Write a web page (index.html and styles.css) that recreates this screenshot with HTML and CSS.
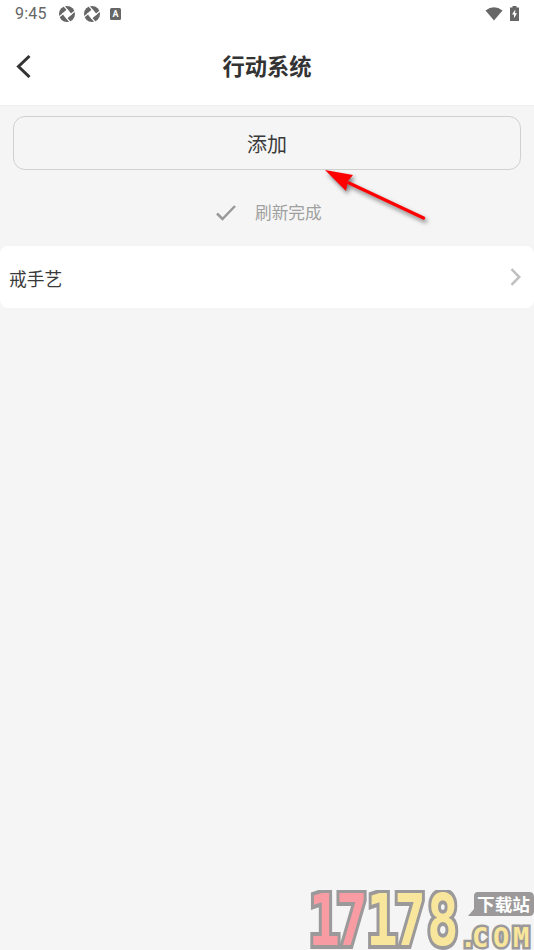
FILE: index.html
```html
<!DOCTYPE html>
<html lang="zh-CN">
<head>
<meta charset="utf-8">
<title>行动系统</title>
<link rel="stylesheet" href="styles.css">
</head>
<body>
<div class="app">
  <header class="header">
    <div class="status">
      <span class="time">9:45</span>
      <svg class="aperture" viewBox="0 0 16 16"><circle cx="8" cy="8" r="8"/><path class="hole" d="M8.500 3.100L12.900 8.500 7.500 12.900 3.100 7.500Z"/><path class="gap" d="M8.500 4.200L5 0M11.800 8.500L16 5M7.500 11.800L11 16M4.200 7.500L0 11"/></svg>
      <svg class="aperture" viewBox="0 0 16 16"><circle cx="8" cy="8" r="8"/><path class="hole" d="M8.500 3.100L12.900 8.500 7.500 12.900 3.100 7.500Z"/><path class="gap" d="M8.500 4.200L5 0M11.800 8.500L16 5M7.500 11.800L11 16M4.200 7.500L0 11"/></svg>
      <span class="badge">A</span>
      <span class="spacer"></span>
      <svg class="wifi" viewBox="0 0 18 14"><path d="M.5 3.400Q9-3 17.500 3.400L9 13.500Z"/></svg>
      <svg class="battery" viewBox="0 0 9 15"><path class="cell" d="M2.500 0h4v1.500H9V15H0V1.500h2.500Z"/><path class="bolt" d="M5.300 3.500L2 8.500h2v3.800L7 7.200H5.100Z"/></svg>
    </div>
    <div class="titlebar">
      <svg class="back" viewBox="0 0 16 24"><path d="M13.500 2L2.500 12.500l11 10.500"/></svg>
      <h1>行动系统</h1>
    </div>
  </header>
  <main>
    <button class="add">添加</button>
    <div class="refresh">
      <svg class="check" viewBox="0 0 20 16"><path d="M1 8.500l5.500 5.500L19 1"/></svg>
      <span>刷新完成</span>
    </div>
    <div class="item">
      <span>戒手艺</span>
      <svg class="next" viewBox="0 0 11 18"><path d="M1.500 1.200L9.300 9l-7.800 7.800"/></svg>
    </div>
  </main>
  <svg class="arrow" viewBox="0 0 120 66"><path class="shaft" d="M28 17L102.500 52"/><path class="head" d="M4 4l28 5-5 6-2 10Z"/></svg>
  <svg class="watermark" viewBox="0 0 224 60">
    <text class="digits" transform="scale(0.74 1)" x="-2 35 76 114 158" y="55"><tspan class="pink">17</tspan><tspan class="gold">178</tspan></text>
    <path class="bubble" d="M168 2h51q5 0 5 5v14q0 5-5 5h-61l6-7V6q0-4 4-4Z"/>
    <text class="site" x="167" y="20.500" textLength="53" lengthAdjust="spacingAndGlyphs">下载站</text>
    <text class="com" x="150 162 183 203" y="57">.COM</text>
  </svg>
</div>
</body>
</html>
```
FILE: styles.css
```css
* { box-sizing: border-box; }
body { margin: 0; font-family: "Noto Sans CJK SC", sans-serif; color: #333; }
.app { position: relative; height: 950px; overflow: hidden; background: #f5f5f5; }
.header { height: 106px; background: #fff; border-bottom: 1px solid #efefef; }
.status { display: flex; align-items: center; height: 27px; padding: 0 15px; color: #666; }
.time { width: 44px; font: 16px/27px Roboto, sans-serif; letter-spacing: 0.2px; }
.aperture { width: 16px; height: 16px; margin-right: 8.500px; fill: #666; }
.hole { fill: #fff; }
.gap { fill: none; stroke: #fff; stroke-width: 1.200; }
.badge { width: 11px; height: 12px; margin-left: 2px; border-radius: 1.500px; background: #666; color: #fff; font: bold 9px/12px Roboto, sans-serif; text-align: center; }
.spacer { flex: 1; }
.wifi { width: 18px; height: 14px; margin-right: 7px; fill: #666; }
.battery { width: 9px; height: 15px; }
.cell { fill: #666; }
.bolt { fill: #fff; }
.titlebar { display: grid; grid-template-columns: 32px 1fr 32px; align-items: center; height: 78px; padding: 0 16px; }
.back { width: 16px; height: 24px; fill: none; stroke: #333; stroke-width: 3; }
h1 { margin: -2px 0 0; font-size: 22.300px; line-height: 32px; font-weight: 700; text-align: center; }
.add { display: block; width: 508px; height: 54px; margin: 10px auto 0; padding: 1px 0 0; border: 1.500px solid #d0d0d0; border-radius: 12px; background: transparent; color: #3a3a3a; font: 20px/50px "Noto Sans CJK SC", sans-serif; }
.refresh { display: flex; align-items: center; gap: 20px; height: 76px; padding: 9px 0 0 216px; color: #a0a0a0; font-size: 16.700px; }
.check { width: 20px; height: 16px; fill: none; stroke: #999; stroke-width: 2.500; }
.refresh span { margin: -2px 0 0 -1px; }
.item { display: flex; align-items: center; justify-content: space-between; height: 62px; padding: 0 13px 0 9px; border-radius: 8px; background: #fff; color: #3a3a3a; font-size: 17.800px; }
.item span { padding-top: 2px; }
.next { width: 11px; height: 18px; fill: none; stroke: #c0c0c0; stroke-width: 2.500; }
.arrow { position: absolute; left: 321px; top: 166px; width: 120px; height: 66px; filter: drop-shadow(2px 3px 2px rgba(0, 0, 0, 0.5)); }
.shaft { stroke: #f00; stroke-width: 3.300; stroke-linecap: round; }
.head { fill: #f00; }
.watermark { position: absolute; left: 310px; top: 890px; width: 224px; height: 60px; }
.digits, .com { font-family: "DejaVu Sans Mono", monospace; font-weight: 700; paint-order: stroke; stroke: #9b9999; stroke-linejoin: miter; }
.digits { font-size: 71px; stroke-width: 8px; }
.pink { fill: #f99ba3; }
.gold, .com { fill: #f8e69c; }
.com { font-size: 27px; stroke-width: 5px; }
.bubble { fill: #9b9999; }
.site { fill: #fff; font-family: "Noto Sans CJK SC", sans-serif; font-size: 17px; font-weight: 700; }
```
